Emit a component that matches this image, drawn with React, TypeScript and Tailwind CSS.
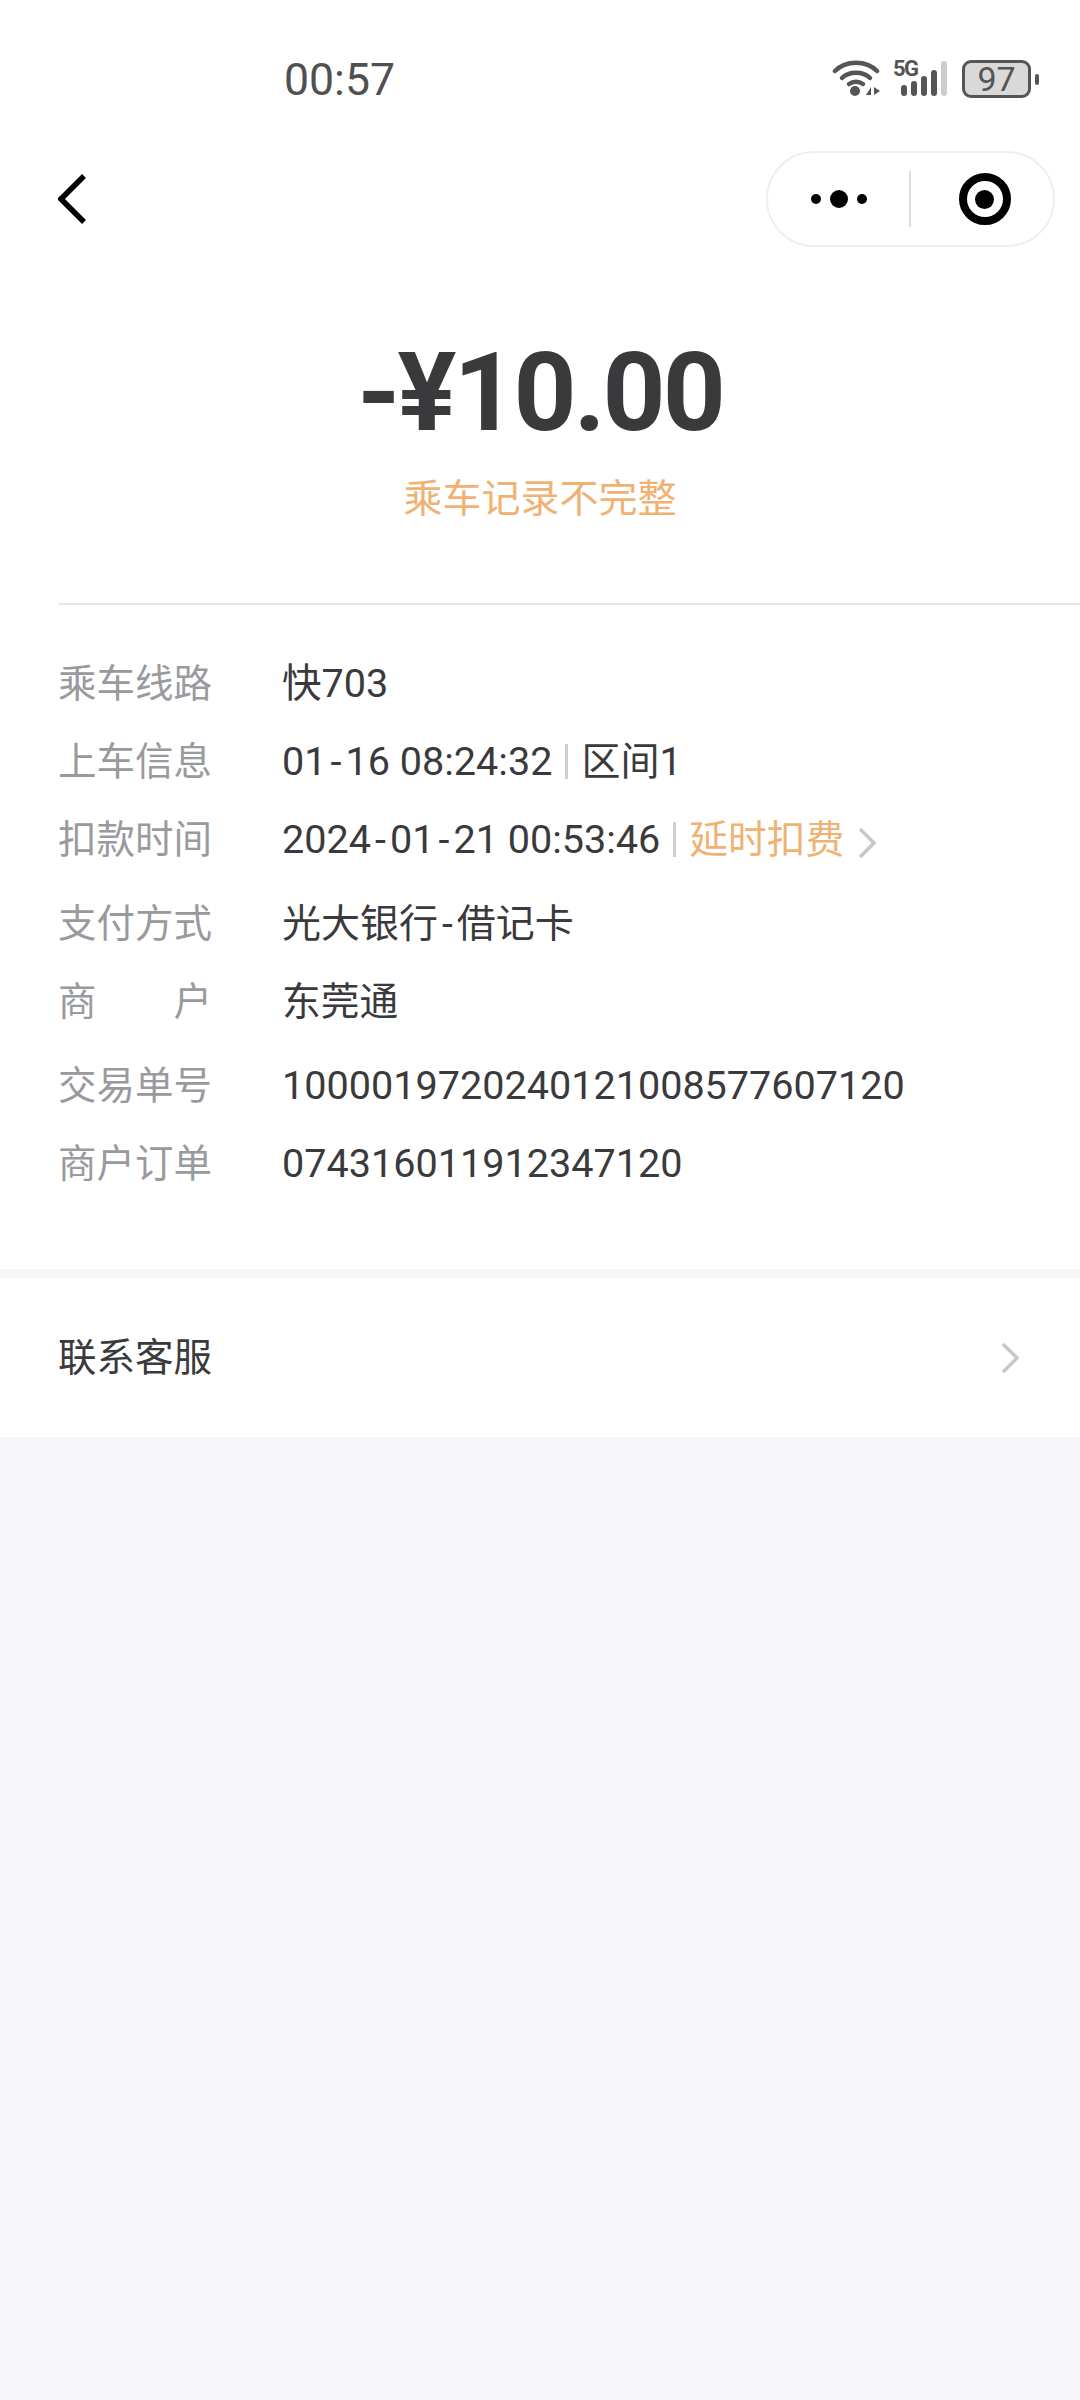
const cjk = "font-['Roboto','Noto_Sans_CJK_SC',sans-serif]";

function WifiIcon() {
  return (
    <svg width="50" height="40" viewBox="0 0 50 40" className="shrink-0">
      <g fill="none" stroke="#555" strokeWidth="4.5" strokeLinecap="round">
        <path d="M3 12C14 1 34 1 45 12" />
        <path d="M10 19C17 12 31 12 38 19" />
        <path d="M17 25C21 22 27 22 31 25" />
      </g>
      <circle cx="23" cy="32" r="5" fill="#555" />
      <path d="M34 36L39 28V36ZM42 28L48 32L42 36Z" fill="#555" />
    </svg>
  );
}

function SignalIcon() {
  return (
    <div className="relative ml-[11px] h-[40px] w-[54px] shrink-0">
      <span className="absolute left-0 top-[-1px] font-['Roboto'] text-[22px] leading-[22px] font-bold tracking-[-1.5px] text-[#555]">5G</span>
      <svg width="54" height="40" viewBox="0 0 54 40">
        <rect x="8" y="26" width="6" height="11" rx="3" fill="#555" />
        <rect x="18" y="22" width="6" height="15" rx="3" fill="#555" />
        <rect x="28" y="17" width="6" height="20" rx="3" fill="#555" />
        <rect x="38" y="11" width="6" height="26" rx="3" fill="#555" />
        <rect x="48" y="2" width="6" height="35" rx="3" fill="#ccc" />
      </svg>
    </div>
  );
}

function BatteryIcon() {
  return (
    <div className="ml-[15px] flex items-center gap-[4px]">
      <div className="flex h-[38px] w-[69px] items-center justify-center rounded-[9px] border-[3px] border-[#555] bg-[#d9d9d9] font-['Roboto'] text-[34px] leading-none text-[#555]">
        97
      </div>
      <div className="h-[11px] w-[4px] rounded-full bg-[#555]" />
    </div>
  );
}

function Dash() {
  return <span className="mx-[4px]">-</span>;
}

function Divider() {
  return <span className="mx-[13px] h-[35px] w-[3px] bg-[#cfcfcf]" />;
}

function Row({ label, extra, children }: { label: React.ReactNode; extra?: boolean; children: React.ReactNode }) {
  return (
    <div className={`flex items-center ${extra ? 'h-[84px] pb-[6px]' : 'h-[78px]'}`}>
      <div className="w-[224px] shrink-0 text-[38.5px] text-[#999a9e]">{label}</div>
      <div className="flex items-center text-[39.6px] text-[#3a3a3c]">{children}</div>
    </div>
  );
}

export default function App() {
  return (
    <div className={`min-h-[2400px] bg-[#f7f7f9] ${cjk}`}>
      <div className="bg-white">
        <div className="flex h-[136px] items-start pt-[50px] pr-[41px] pl-[284px]">
          <span className="font-['Roboto'] text-[44.6px] leading-[60px] text-[#505050]">00:57</span>
          <div className="ml-auto flex items-center pt-[9px]">
            <WifiIcon />
            <SignalIcon />
            <BatteryIcon />
          </div>
        </div>

        <div className="flex h-[126px] items-center justify-between pr-[25px] pl-[58px]">
          <svg width="28" height="52" viewBox="0 0 28 52">
            <path d="M26 3L3 26L26 49" fill="none" stroke="#000" strokeWidth="5.5" />
          </svg>
          <div className="flex h-[96px] w-[289px] items-center rounded-full border-2 border-[#efefef]">
            <div className="flex w-[141px] items-center justify-center gap-[9px]">
              <span className="h-[10px] w-[10px] rounded-full bg-black" />
              <span className="h-[18px] w-[18px] rounded-full bg-black" />
              <span className="h-[10px] w-[10px] rounded-full bg-black" />
            </div>
            <div className="h-[56px] w-[2px] bg-[#dcdcdc]" />
            <div className="flex flex-1 items-center justify-center pl-[5px]">
              <div className="flex h-[52px] w-[52px] items-center justify-center rounded-full border-[8px] border-black">
                <span className="h-[19px] w-[19px] rounded-full bg-black" />
              </div>
            </div>
          </div>
        </div>

        <div className="flex flex-col items-center pt-[66px]">
          <div className="font-['Roboto'] text-[110px] leading-[130px] font-bold tracking-[-3px] text-[#3a3a3c]">-¥10.00</div>
          <div className="mt-[13px] text-[39px] leading-[56px] text-[#efb273]">乘车记录不完整</div>
        </div>

        <div className="mt-[76px] ml-[58px] h-[2px] bg-[#e8e8e8]" />

        <div className="px-[58px] pt-[40px] pb-[66px]">
          <Row label="乘车线路">快703</Row>
          <Row label="上车信息">
            01<Dash />16 08:24:32
            <Divider />
            <span className="text-[39px]">区间</span>1
          </Row>
          <Row label="扣款时间" extra>
            2024<Dash />01<Dash />21 00:53:46
            <Divider />
            <span className="text-[38.75px] text-[#efb273]">延时扣费</span>
            <svg width="20" height="34" viewBox="0 0 20 34" className="mt-[6px] ml-[13px]">
              <path d="M3 3L17 17L3 31" fill="none" stroke="#c8c8c8" strokeWidth="3.5" />
            </svg>
          </Row>
          <Row label="支付方式">
            <span className="text-[39px]">光大银行<Dash />借记卡</span>
          </Row>
          <Row
            extra
            label={
              <span className="flex w-[154px] justify-between">
                <span>商</span>
                <span>户</span>
              </span>
            }
          >
            <span className="text-[38.75px]">东莞通</span>
          </Row>
          <Row label="交易单号">1000019720240121008577607120</Row>
          <Row label="商户订单">074316011912347120</Row>
        </div>
      </div>

      <div className="mt-[9px] flex h-[159px] items-center justify-between bg-white pr-[60px] pl-[58px]">
        <span className="text-[38.5px] text-[#3a3a3c]">联系客服</span>
        <svg width="20" height="34" viewBox="0 0 20 34">
          <path d="M3 3L17 17L3 31" fill="none" stroke="#c8c8c8" strokeWidth="3.5" />
        </svg>
      </div>
    </div>
  );
}
